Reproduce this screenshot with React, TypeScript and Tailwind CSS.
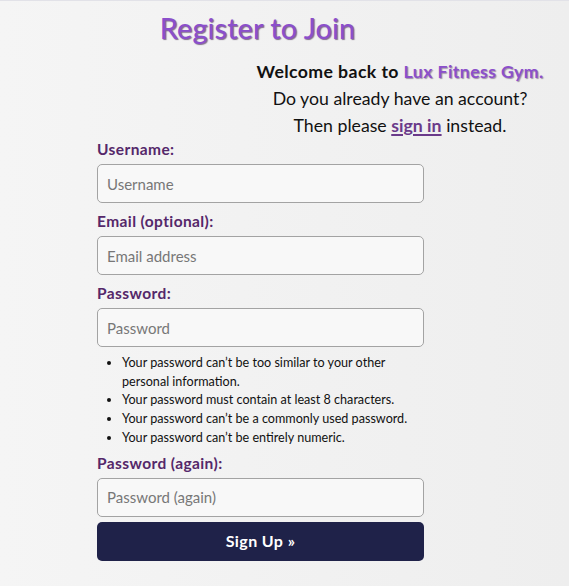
import React from "react";

const font = { fontFamily: "Lato, 'Noto Sans', sans-serif" };

function Field({ label, placeholder, type = "text" }: { label: string; placeholder: string; type?: string }) {
  return (
    <div className="flex flex-col">
      <label className="h-[28px] flex items-center text-[15.5px] tracking-[0.4px] font-bold text-[#55286a] leading-none">{label}</label>
      <input
        type={type}
        placeholder={placeholder}
        className="h-[39px] w-[327px] rounded-[5px] border-[1.5px] border-[#a3a3a3] bg-[#f8f8f8] px-[9px] text-[15px] text-[#333] placeholder:text-[#777] outline-none"
        style={font}
      />
    </div>
  );
}

export default function App() {
  return (
    <div
      className="min-h-[586px] w-[569px] bg-gradient-to-r from-[#f5f5f5] to-[#eeeeee] border-t border-[#e2e2e8] text-[#111]"
      style={font}
    >
      <div className="w-[327px] ml-[97px] pt-[9px]">
        <h1 className="text-center text-[29px] leading-[36px] font-medium text-[#8b4fcb] [text-shadow:1px_1px_1px_rgba(40,0,60,0.55)] pr-[6px]">
          Register to Join
        </h1>
      </div>
      <div className="ml-[240px] w-[320px] text-center text-[17.7px] leading-[27px] mt-[12px]">
        <p className="font-bold tracking-[0.4px] whitespace-nowrap">
          Welcome back to{" "}
          <span className="text-[#8b4fcb] [text-shadow:1px_1px_1px_rgba(40,0,60,0.4)]">Lux Fitness Gym.</span>
        </p>
        <p>Do you already have an account?</p>
        <p>
          Then please{" "}
          <a className="font-bold text-[#6a3a8a] underline underline-offset-2 decoration-2" href="#">
            sign in
          </a>{" "}
          instead.
        </p>
      </div>
      <form className="w-[327px] ml-[97px] flex flex-col" onSubmit={(e) => e.preventDefault()}>
        <div className="-mt-[3px]">
          <Field label="Username:" placeholder="Username" />
        </div>
        <div className="mt-[5px]">
          <Field label="Email (optional):" placeholder="Email address" type="email" />
        </div>
        <div className="mt-[5px]">
          <Field label="Password:" placeholder="Password" type="password" />
        </div>
        <ul className="list-disc ml-[25px] mt-[7px] text-[12.6px] leading-[18.7px] text-[#111]">
          <li className="pr-[5px]">Your password can’t be too similar to your other personal information.</li>
          <li>Your password must contain at least 8 characters.</li>
          <li>Your password can’t be a commonly used password.</li>
          <li>Your password can’t be entirely numeric.</li>
        </ul>
        <div className="mt-[2px]">
          <Field label="Password (again):" placeholder="Password (again)" type="password" />
        </div>
        <button
          type="submit"
          className="mt-[5px] h-[39px] w-[327px] rounded-[5px] bg-[#1f2249] text-white text-[16px] tracking-[0.4px] font-bold"
        >
          Sign Up »
        </button>
      </form>
    </div>
  );
}
